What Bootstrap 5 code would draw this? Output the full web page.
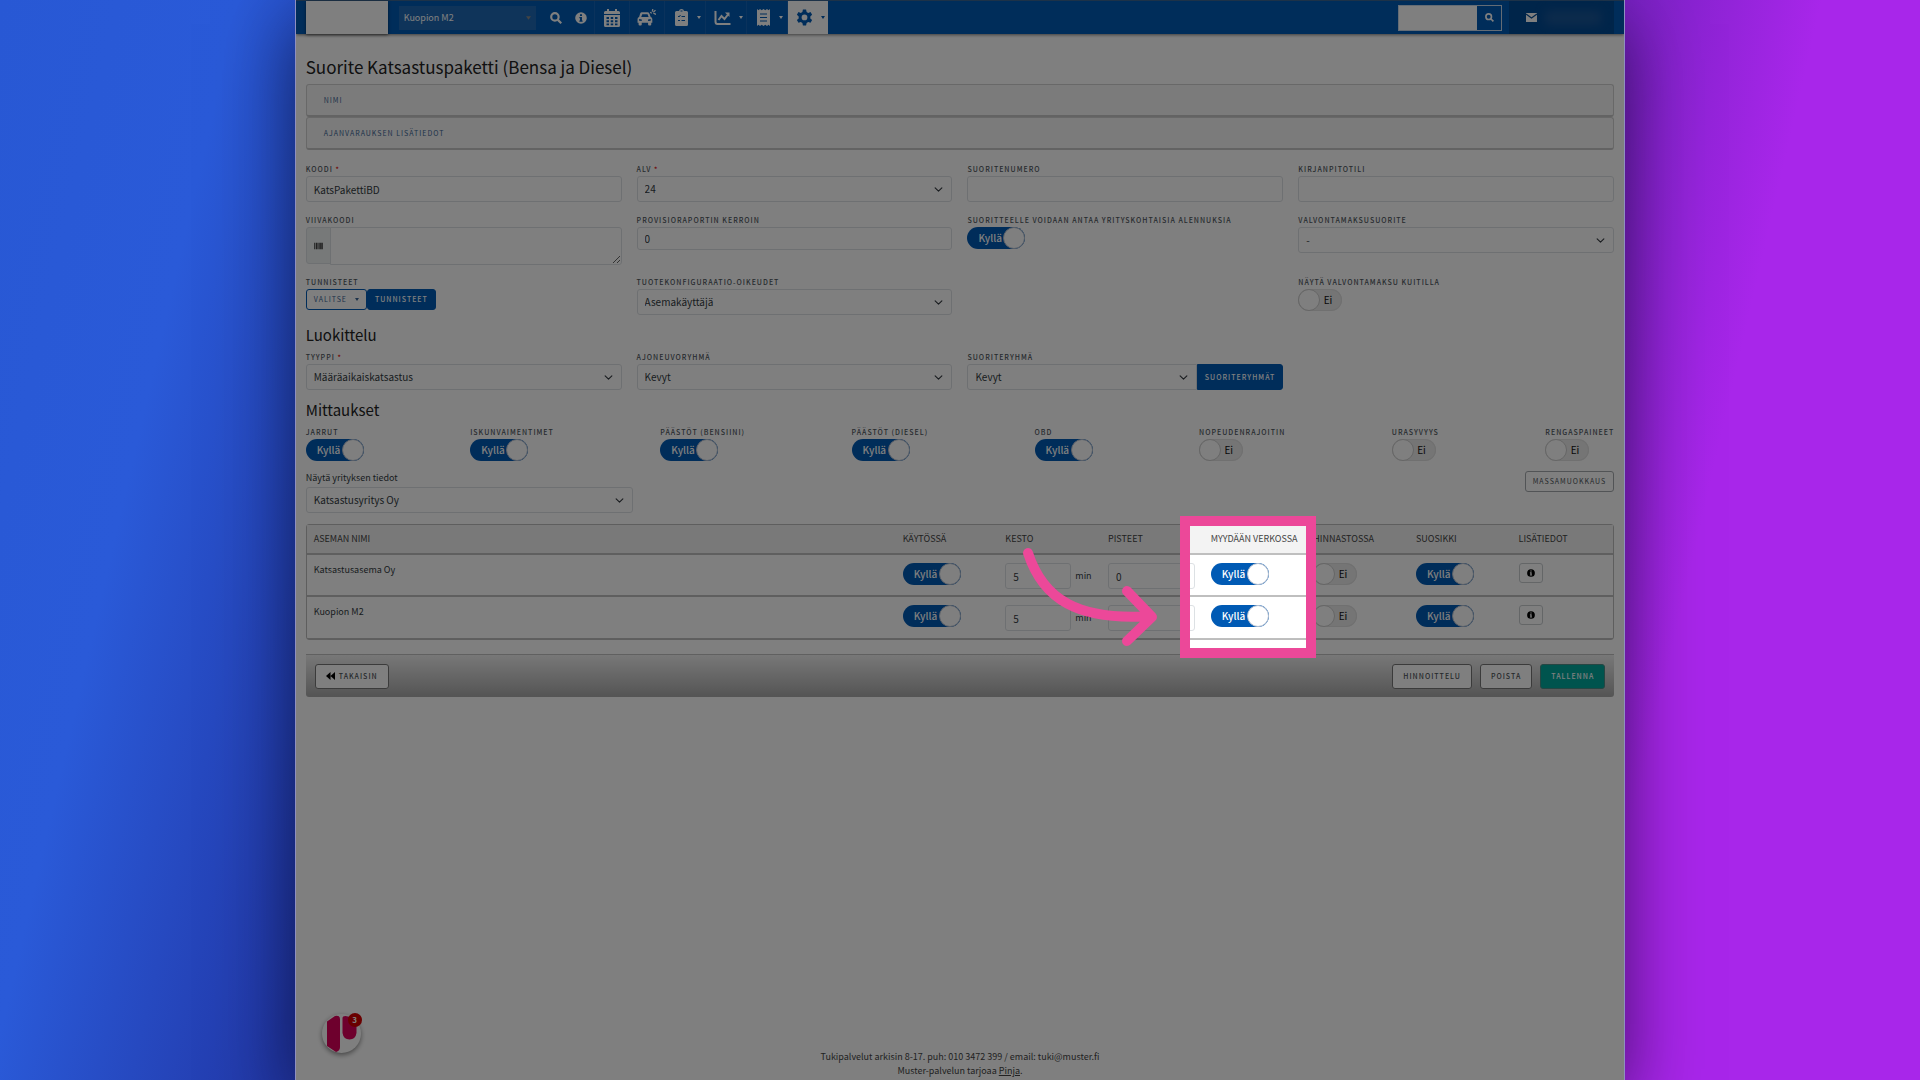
<!DOCTYPE html>
<html lang="fi">
<head>
<meta charset="utf-8">
<meta name="viewport" content="width=device-width, initial-scale=1">
<title>Suorite Katsastuspaketti (Bensa ja Diesel)</title>
<link href="https://cdn.jsdelivr.net/npm/bootstrap@5.3.0/dist/css/bootstrap.min.css" rel="stylesheet">
<style>
:root { --blue: #005ab4; --line: #dde1e4; --ink: #333b42; }
body {
  font-family: "Noto Sans CJK SC", "Open Sans", sans-serif; font-size: 9px; line-height: 14px; color: var(--ink);
  background: linear-gradient(103deg, #2858d4 0%, #2a5ad8 11%, #2238a8 24%, #6a20b8 72%, #a826ea 84%, #a826ea 100%);
}
.shell { width: 69.3%; background: #fff; border: solid #8f8fc0; border-width: 0 1px; overflow: hidden; box-shadow: 0 24px 70px rgba(0,0,20,.6); }
.shell > main, .shell > header { padding-left: 10px; padding-right: 10px; }

/* top bar */
.topbar { background: var(--blue); height: 34px; border-top: 1px solid #3a6490; box-shadow: 0 1px 3px rgba(0,0,0,.5); }
.brand-box { width: 82px; height: 33px; background: #fff; margin-right: 11px; box-shadow: 0 1px 3px rgba(0,0,0,.5); }
.station { width: 137px; height: 24px; padding: 0 5px; font-size: 9px; line-height: 24px; color: #fff; border: 0; border-radius: 0; background: #1e69b5 url("data:image/svg+xml,%3Csvg xmlns='http://www.w3.org/2000/svg' viewBox='0 0 6 4'%3E%3Cpath fill='%23888' d='M0 0h6L3 4z'/%3E%3C/svg%3E") no-repeat right 5px center / 5px 4px; }
.tool { width: 25px; color: #fff; }
.menu-item { height: 33px; padding: 0 7px; gap: 8px; color: #fff; border-left: 1px solid #1565b8; }
.menu-item.wide { width: 41px; padding: 0 4px 0 10px; }
.menu-item.single { width: 35px; }
.menu-item.active { background: #fff; color: var(--blue); }
.caret { width: 0; border: 2px solid transparent; border-top: 3px solid currentColor; border-bottom: 0; }
.finder { width: 104px; height: 26px; border: 1px solid #c8d8ea; margin-right: 7px; }
.finder input { background: #fff; border: 0; min-width: 0; border-radius: 0; }
.finder button { width: 24px; background: var(--blue); color: #fff; border: 0; }
.account { width: 105px; height: 33px; background: #004a94; color: #fff; padding-left: 17px; }
.blurred { width: 56px; height: 14px; background: #1a5698; filter: blur(5px); }

/* headings and panels */
h1 { font-size: 17px; line-height: 24px; margin: 21px 0 5px; font-weight: 400; color: #222; }
h2 { font-size: 15px; line-height: 20px; margin: 10px 0 5px; font-weight: 400; color: #222; }
.fold { height: 33px; background: #f7f7f7; border: 1px solid #d0d0d0; border-bottom: 2px solid #c6c6c6; border-radius: 3px; padding: 0 17px; font-size: 7px; letter-spacing: 1px; color: #3b6594; text-decoration: none; }

/* form */
.fields { --bs-gutter-x: 15px; --bs-gutter-y: 0; }
.fields + .fields { margin-top: 11px; }
.cap { display: block; font-size: 7px; line-height: 14px; font-weight: 500; letter-spacing: 1px; text-transform: uppercase; color: #50575e; }
.cap i { color: #e00000; font-style: normal; }
.box { height: 26px; padding: 0 7px; font-size: 10px; line-height: 24px; color: var(--ink); border: 1px solid var(--line); border-radius: 3px; background-color: #fff; }
.box.low { height: 23px; line-height: 21px; }
.form-select.box { background-position: right 8px center; background-size: 9px 9px; }
.code-area { height: 37px; }
.code-area .input-group-text { width: 25px; padding: 0 7px; border-color: var(--line); background: #eef2f3; border-radius: 3px 0 0 3px; }
.code-area textarea { border-color: var(--line); border-radius: 0 3px 3px 0; min-width: 0; resize: vertical; }
.act { height: 21px; font-size: 7px; line-height: 19px; letter-spacing: 1px; padding: 0 7px; border-radius: 3px; border: 1px solid #a4a9ad; color: #4d5358; background: #fff; }
.act.fill { background: var(--blue); border-color: var(--blue); color: #fff; font-weight: 500; }
.act.line { border-color: var(--blue); color: #3b6594; }
.act.tall { height: 26px; }

/* switches: the checkbox itself is the round knob */
.sw { display: inline-flex; align-items: center; height: 22px; border-radius: 11px; font-size: 10px; line-height: 20px; }
.sw input { appearance: none; width: 22px; height: 22px; margin: 0; border-radius: 50%; background: #fff; border: 1px solid #b4bfd0; }
.sw.yes { background: var(--blue); color: #fff; width: 58px; padding-left: 11px; justify-content: space-between; font-weight: 500; }
.sw.no { background: #eaeaea; color: #111; width: 44px; padding-right: 10px; justify-content: space-between; box-shadow: inset 0 0 0 1px #e0e0e0; }
.sw.no input { border-color: #ccc; }

.company { margin-top: 6px; }
.company label { margin-bottom: 2px; }

/* stations */
.station-area { margin-top: 11px; }
.stations { table-layout: fixed; border: 1px solid #bdbdbd; border-collapse: separate; border-spacing: 0; border-radius: 3px; margin: 0; color: inherit; }
.stations > :not(caption) > * > * { padding: 8px 8px 0 8px; vertical-align: top; border-bottom: 2px solid #bfbfbf; background: transparent; }
.stations thead th { background: #f3f3f3; padding-top: 7px; height: 30px; font-weight: 400; text-transform: uppercase; white-space: nowrap; color: #444; }
.stations tbody td { height: 42px; }
.stations th:first-child { width: 45%; }
.stations > tbody > tr > td:first-child, .stations > thead > tr > th:first-child { padding-left: 7px; }
.stations tbody tr:last-child td { border-bottom-width: 1px; }
.mins { width: 66px; }
.info-btn { width: 24px; height: 20px; padding: 0; border: 1px solid #c8cccf; border-radius: 3px; background: #fff; color: #000; }

/* guide marks over the table */
.spot { position: absolute; z-index: 5; left: 66.8%; top: -8px; width: 10.4%; height: 142px; border: 10px solid #ec4899; box-shadow: 0 0 0 3000px rgba(0,0,0,.5); pointer-events: none; }
.pointer-arrow { position: absolute; z-index: 6; left: 54.7%; top: 20px; width: 140px; height: 106px; pointer-events: none; }

.actions { height: 43px; margin-top: 14px; padding: 0 9px; border-top: 1px solid #c0c0c0; border-radius: 0 0 3px 3px; background: linear-gradient(#f0f0f0, #a9a9a9); }
.actions .act { height: 25px; padding: 0 10px; border: 1px solid #777; font-weight: 500; }
.actions .act.go { background: #00a99d; border-color: #4c8d87; color: #fff; }
.chat { position: absolute; left: 26px; bottom: 27px; width: 39px; height: 39px; border-radius: 50%; border: 0; padding: 0; background: #fff; box-shadow: 0 2px 5px rgba(0,0,0,.45); }
.chat b { position: absolute; right: -1px; top: -1px; width: 14px; height: 14px; border-radius: 50%; background: #d40000; color: #fff; font-size: 8px; line-height: 14px; }
.foot { color: #444; padding-bottom: 2px; }
.foot a { color: inherit; }
</style>
<script src="https://cdn.jsdelivr.net/npm/bootstrap@5.3.0/dist/js/bootstrap.bundle.min.js"></script>
</head>
<body>
<div class="shell position-relative mx-auto min-vh-100 d-flex flex-column">
  <header class="topbar d-flex align-items-center">
    <div class="brand-box"></div>
    <select class="station form-select" aria-label="Asema"><option>Kuopion M2</option></select>
    <div class="d-flex align-items-center ms-2">
      <a href="#" class="tool d-flex justify-content-center" aria-label="Haku"><svg width="12" height="12" viewBox="0 0 11 11" fill="none" stroke="currentColor" stroke-width="2"><circle cx="4.5" cy="4.5" r="3.4"/><path d="M7 7l3.3 3.3"/></svg></a>
      <a href="#" class="tool d-flex justify-content-center" aria-label="Tietoa"><svg width="12" height="12" viewBox="0 0 11 11"><circle cx="5.5" cy="5.5" r="5.3" fill="currentColor"/><path d="M4.6 2h1.8v1.6H4.6zM4 4.6h2.4v3.2H7V9H4V7.800h.6v-2H4z" fill="#005ab4"/></svg></a>
    </div>
    <nav class="d-flex">
      <a href="#" class="menu-item single d-flex align-items-center justify-content-center" aria-label="Kalenteri"><svg class="flex-shrink-0" width="16" height="18" viewBox="0 0 16 18" fill="currentColor"><path d="M3 0h2v2h6V0h2v2h1.500q1.500 0 1.500 1.500V5H0V3.500Q0 2 1.500 2H3z"/><path fill-rule="evenodd" d="M0 6h16v10.500q0 1.500-1.500 1.500h-13Q0 18 0 16.500zM2.500 8v2h2.500V8zm4.200 0v2h2.500V8zM11 8v2h2.500V8zM2.500 11.300v2h2.500v-2zm4.200 0v2h2.500v-2zm4.300 0v2h2.500v-2zM2.500 14.500v1.700h2.500v-1.700zm4.200 0v1.700h2.500v-1.700zm4.300 0v1.700h2.500v-1.700z"/></svg></a>
      <a href="#" class="menu-item single d-flex align-items-center justify-content-center" aria-label="Ajoneuvot"><svg class="flex-shrink-0" width="19" height="18" viewBox="0 0 18 17" fill="currentColor"><path fill-rule="evenodd" d="M4.500 3h5.500q1.200 0 1.700 1.200L13 7.500q1.500.6 1.500 2V13H13.500v1.700q0 1-1 1h-1q-1 0-1-1V13h-6v1.700q0 1-1 1h-1q-1 0-1-1V13H.5V9.500q0-1.400 1.500-2L3 4.200Q3.500 3 4.500 3zM5 5l-1 2.500h7L10 5zM2 9.500v1.500l2.500.3V10zM13 9.500l-2.500.5v1.300L13 11z"/><path d="M12.500 3l1.500 1M15 0l-.5 2.500M17.500 1l-2 2M18 5l-2.500-1" stroke="currentColor" stroke-width="1.200"/></svg></a>
      <a href="#" class="menu-item wide d-flex align-items-center justify-content-between" aria-label="Työt"><svg width="13" height="17" viewBox="0 0 13 17"><path fill="currentColor" d="M1.500 2H4q.3-2 2.500-2T9 2h2.500Q13 2 13 3.500v12q0 1.500-1.500 1.500h-10Q0 17 0 15.500v-12Q0 2 1.500 2z"/><path d="M5.500 2h2M3 7l1 1 1.500-2M6.500 7.500H10M3 11.500h2M6.500 11.500H10" fill="none" stroke="#005ab4"/></svg><span class="caret"></span></a>
      <a href="#" class="menu-item wide d-flex align-items-center justify-content-between ps-2" aria-label="Raportit"><svg class="flex-shrink-0" width="17" height="14" viewBox="0 0 16 14" fill="none" stroke="currentColor" stroke-width="2"><path d="M1 0v10.500Q1 13 3 13h13M4 9l3-4 3 3 3.500-4.500"/><path d="M10.500 1.500H15V6z" fill="currentColor" stroke="none"/></svg><span class="caret"></span></a>
      <a href="#" class="menu-item wide d-flex align-items-center justify-content-between" aria-label="Kuitit"><svg width="13" height="17" viewBox="0 0 13 17"><path fill="currentColor" d="M0 0l1.500 1.200L3 0l1.700 1.200L6.500 0l1.800 1.200L10 0l1.500 1.200L13 0v17l-1.500-1.200L10 17l-1.700-1.200L6.500 17l-1.800-1.200L3 17l-1.500-1.200L0 17z"/><path d="M3 5h7M3 8.500h7M3 12h7" stroke="#005ab4"/></svg><span class="caret"></span></a>
      <a href="#" class="menu-item wide active d-flex align-items-center justify-content-between ps-2" aria-label="Asetukset"><svg class="flex-shrink-0" width="17" height="18" viewBox="0 0 16 17"><path d="M6.500.5h3l.5 2.300 1.500.9 2.200-.8 1.500 2.600-1.700 1.600v1.800l1.700 1.600-1.500 2.600-2.200-.8-1.500.9-.5 2.300h-3L6 13.200l-1.500-.9-2.200.8L.8 10.500l1.700-1.600V7.100L.8 5.500l1.500-2.600 2.200.8L6 2.800z" fill="currentColor"/><circle cx="8" cy="8" r="2.700" fill="#fff"/></svg><span class="caret"></span></a>
    </nav>
    <form class="finder d-flex ms-auto"><input class="form-control p-0" type="search" aria-label="Hae"><button type="button" class="flex-shrink-0 p-0 d-flex align-items-center justify-content-center" aria-label="Hae"><svg width="9" height="9" viewBox="0 0 11 11" fill="none" stroke="currentColor" stroke-width="2"><circle cx="4.500" cy="4.500" r="3.400"/><path d="M7 7l3.300 3.300"/></svg></button></form>
    <div class="account d-flex align-items-center"><svg width="11" height="9" viewBox="0 0 11 9"><path fill="#fff" d="M0 0h11v9H0z"/><path d="M0 1l5.500 4L11 1" fill="none" stroke="#004a94" stroke-width="1.200"/></svg><span class="blurred ms-2"></span></div>
  </header>

  <main class="flex-grow-1">
    <h1>Suorite Katsastuspaketti (Bensa ja Diesel)</h1>
    <a href="#" class="fold d-flex align-items-center">NIMI</a>
    <a href="#" class="fold d-flex align-items-center">AJANVARAUKSEN LISÄTIEDOT</a>

    <div class="row fields mt-2 pt-1">
      <div class="col-3"><label class="cap" for="koodi">Koodi <i>*</i></label><input id="koodi" class="form-control box" value="KatsPakettiBD"></div>
      <div class="col-3"><label class="cap" for="alv">ALV <i>*</i></label><select id="alv" class="form-select box"><option>24</option></select></div>
      <div class="col-3"><label class="cap" for="nro">Suoritenumero</label><input id="nro" class="form-control box"></div>
      <div class="col-3"><label class="cap" for="tili">Kirjanpitotili</label><input id="tili" class="form-control box"></div>
    </div>
    <div class="row fields">
      <div class="col-3"><label class="cap" for="viiva">Viivakoodi</label>
        <div class="input-group code-area flex-nowrap"><span class="input-group-text"><svg width="11" height="8" viewBox="0 0 11 8" fill="#444"><path d="M0 0h1v8H0zM2 0h2v8H2zM4.500 0h1v8h-1zM6 0h1v8H6zM7.500 0h2v8h-2zM10 0h1v8h-1z"/></svg></span><textarea id="viiva" class="form-control"></textarea></div></div>
      <div class="col-3"><label class="cap" for="prov">Provisioraportin kerroin</label><input id="prov" class="form-control box low" value="0"></div>
      <div class="col-3"><label class="cap" for="alennus">Suoritteelle voidaan antaa yrityskohtaisia alennuksia</label><label class="sw yes">Kyllä<input id="alennus" type="checkbox" checked></label></div>
      <div class="col-3"><label class="cap" for="valv">Valvontamaksusuorite</label><select id="valv" class="form-select box"><option>-</option></select></div>
    </div>
    <div class="row fields">
      <div class="col-3"><span class="cap">Tunnisteet</span><div class="d-flex"><button type="button" class="act line d-flex align-items-center gap-2">VALITSE <span class="caret"></span></button><button type="button" class="act fill">TUNNISTEET</button></div></div>
      <div class="col-3"><label class="cap" for="oik">Tuotekonfiguraatio-oikeudet</label><select id="oik" class="form-select box"><option>Asemakäyttäjä</option></select></div>
      <div class="col-3 offset-3"><label class="cap" for="kuitti">Näytä valvontamaksu kuitilla</label><label class="sw no"><input id="kuitti" type="checkbox">Ei</label></div>
    </div>

    <h2>Luokittelu</h2>
    <div class="row fields">
      <div class="col-3"><label class="cap" for="tyyppi">Tyyppi <i>*</i></label><select id="tyyppi" class="form-select box"><option>Määräaikaiskatsastus</option></select></div>
      <div class="col-3"><label class="cap" for="ajon">Ajoneuvoryhmä</label><select id="ajon" class="form-select box"><option>Kevyt</option></select></div>
      <div class="col-3"><label class="cap" for="ryhma">Suoriteryhmä</label><div class="d-flex"><select id="ryhma" class="form-select box rounded-end-0"><option>Kevyt</option></select><button type="button" class="act fill tall rounded-start-0">SUORITERYHMÄT</button></div></div>
    </div>

    <h2>Mittaukset</h2>
    <div class="d-flex justify-content-between">
      <div><label class="cap" for="m1">Jarrut</label><label class="sw yes">Kyllä<input id="m1" type="checkbox" checked></label></div>
      <div><label class="cap" for="m2">Iskunvaimentimet</label><label class="sw yes">Kyllä<input id="m2" type="checkbox" checked></label></div>
      <div><label class="cap" for="m3">Päästöt (bensiini)</label><label class="sw yes">Kyllä<input id="m3" type="checkbox" checked></label></div>
      <div><label class="cap" for="m4">Päästöt (diesel)</label><label class="sw yes">Kyllä<input id="m4" type="checkbox" checked></label></div>
      <div><label class="cap" for="m5">OBD</label><label class="sw yes">Kyllä<input id="m5" type="checkbox" checked></label></div>
      <div><label class="cap" for="m6">Nopeudenrajoitin</label><label class="sw no"><input id="m6" type="checkbox">Ei</label></div>
      <div><label class="cap" for="m7">Urasyvyys</label><label class="sw no"><input id="m7" type="checkbox">Ei</label></div>
      <div><label class="cap" for="m8">Rengaspaineet</label><label class="sw no"><input id="m8" type="checkbox">Ei</label></div>
    </div>
    <div class="company d-flex justify-content-between">
      <div class="w-25"><label class="d-block" for="yritys">Näytä yrityksen tiedot</label><select id="yritys" class="form-select box"><option>Katsastusyritys Oy</option></select></div>
      <button type="button" class="act">MASSAMUOKKAUS</button>
    </div>

    <div class="station-area position-relative">
      <table class="table stations">
        <thead><tr><th>Aseman nimi</th><th>Käytössä</th><th>Kesto</th><th>Pisteet</th><th>Myydään verkossa</th><th>Hinnastossa</th><th>Suosikki</th><th>Lisätiedot</th></tr></thead>
        <tbody>
          <tr><td>Katsastusasema Oy</td>
            <td><label class="sw yes">Kyllä<input type="checkbox" checked></label></td>
            <td><div class="d-flex align-items-center gap-1"><input class="form-control box mins" aria-label="Kesto" value="5">min</div></td>
            <td><input class="form-control box" aria-label="Pisteet" value="0"></td>
            <td><label class="sw yes">Kyllä<input type="checkbox" checked></label></td>
            <td><label class="sw no"><input type="checkbox">Ei</label></td>
            <td><label class="sw yes">Kyllä<input type="checkbox" checked></label></td>
            <td><button type="button" class="info-btn d-flex align-items-center justify-content-center" aria-label="Lisätiedot"><svg width="8" height="8" viewBox="0 0 11 11"><circle cx="5.500" cy="5.500" r="5.300" fill="currentColor"/><path d="M4.600 2h1.800v1.600H4.600zM4 4.600h2.400v3.200H7V9H4V7.800h.6v-2H4z" fill="#fff"/></svg></button></td></tr>
          <tr><td>Kuopion M2</td>
            <td><label class="sw yes">Kyllä<input type="checkbox" checked></label></td>
            <td><div class="d-flex align-items-center gap-1"><input class="form-control box mins" aria-label="Kesto" value="5">min</div></td>
            <td><input class="form-control box" aria-label="Pisteet" value=""></td>
            <td><label class="sw yes">Kyllä<input type="checkbox" checked></label></td>
            <td><label class="sw no"><input type="checkbox">Ei</label></td>
            <td><label class="sw yes">Kyllä<input type="checkbox" checked></label></td>
            <td><button type="button" class="info-btn d-flex align-items-center justify-content-center" aria-label="Lisätiedot"><svg width="8" height="8" viewBox="0 0 11 11"><circle cx="5.500" cy="5.500" r="5.300" fill="currentColor"/><path d="M4.600 2h1.800v1.600H4.600zM4 4.600h2.400v3.200H7V9H4V7.800h.6v-2H4z" fill="#fff"/></svg></button></td></tr>
        </tbody>
      </table>
      <div class="spot"></div>
      <svg class="pointer-arrow" viewBox="0 0 140 106" fill="none" stroke="#ec4899" stroke-width="10" stroke-linecap="round" stroke-linejoin="round"><path d="M7 9C22 55 56 77 130 72M106 47l25 26-25 24"/></svg>
    </div>

    <div class="actions d-flex align-items-center gap-2">
      <button type="button" class="act me-auto d-flex align-items-center gap-1"><svg width="9" height="8" viewBox="0 0 9 8"><path d="M4.500 0v8L0 4zM9 0v8L4.500 4z"/></svg>TAKAISIN</button>
      <button type="button" class="act">HINNOITTELU</button>
      <button type="button" class="act">POISTA</button>
      <button type="button" class="act go">TALLENNA</button>
    </div>
  </main>

  <button type="button" class="chat" aria-label="Chat"><svg width="39" height="39" viewBox="0 0 39 39" fill="#dc005a"><path d="M5 7.500L13 2q5-1 5 3v28q0 4-4 5L5 32z"/><path d="M20.500 4q0-2 3-2 11 2 11 8v9q-1 6.500-7 6.500t-7-6.500z"/></svg><b>3</b></button>
  <footer class="foot text-center">Tukipalvelut arkisin 8-17. puh: 010 3472 399 / email: tuki@muster.fi<br>Muster-palvelun tarjoaa <a href="#">Pinja</a>.</footer>
</div>
</body>
</html>
